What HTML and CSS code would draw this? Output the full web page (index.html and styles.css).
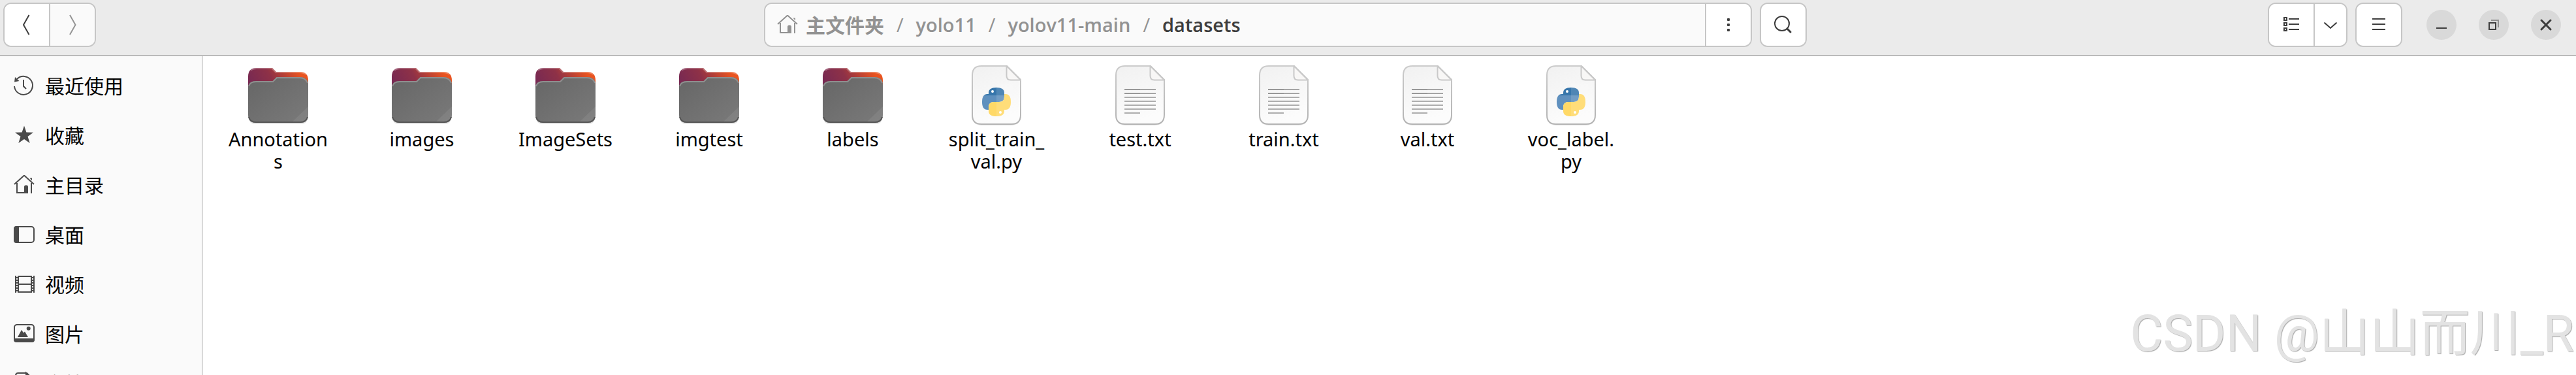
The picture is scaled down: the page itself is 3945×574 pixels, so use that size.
FILE: index.html
```html
<!DOCTYPE html>
<html lang="zh-CN">
<head>
<meta charset="UTF-8">
<meta name="viewport" content="width=device-width, initial-scale=1.0">
<title>datasets</title>
<link rel="stylesheet" href="styles.css">
</head>
<body>

<!-- SHARED ICONS -->
<svg class="defs" width="0" height="0" aria-hidden="true">
    <defs>
        <linearGradient id="folder-back" x1="0" y1="0.6" x2="1" y2="0.4">
            <stop offset="0" stop-color="#772953"/>
            <stop offset="0.4" stop-color="#8e3147"/>
            <stop offset="0.9" stop-color="#e95420"/>
        </linearGradient>
        <linearGradient id="folder-front" x1="0" y1="0" x2="1" y2="1">
            <stop offset="0" stop-color="#666"/>
            <stop offset="1" stop-color="#7a7a7a"/>
        </linearGradient>
        <linearGradient id="paper" x1="0" y1="0" x2="0.3" y2="1">
            <stop offset="0" stop-color="#f1f1f1"/>
            <stop offset="1" stop-color="#fcfcfc"/>
        </linearGradient>
        <linearGradient id="paper-edge" x1="0" y1="0" x2="0" y2="1">
            <stop offset="0" stop-color="#cbcbcb"/>
            <stop offset="1" stop-color="#b3b3b3"/>
        </linearGradient>
        <linearGradient id="snake-blue" gradientUnits="userSpaceOnUse" x1="0" y1="36" x2="0" y2="60">
            <stop offset="0.5" stop-color="#3776ab"/>
            <stop offset="0.5" stop-color="#5f90be"/>
        </linearGradient>
    </defs>
    <symbol id="home" viewBox="0 0 32 32">
        <path d="M1 14 16 0.500 31 14M5 12V27H20M27 12V28" fill="none" stroke="currentColor" stroke-width="2"/>
        <path d="M16 28V18Q16 15.500 18.500 15.500H19.500Q22 15.500 22 18V28ZM24.500 4.500H28V8.500Z" fill="currentColor" stroke="none"/>
    </symbol>
    <symbol id="folder" viewBox="0 0 96 96">
        <path d="M3 80V82Q3 92 14 92H82Q93 92 93 82V80Z" fill="#e4e4e4"/>
        <path d="M2 40V19Q2 6 15 6H39L45 12H81Q94 12 94 25V40Z" fill="url(#folder-back)"/>
        <path d="M6 10Q9 7 15 7H38.500L44.500 13H81Q87 13 90.500 16" fill="none" stroke="#fff" stroke-opacity="0.25" stroke-width="2"/>
        <path d="M2 36Q2 26 14 26H39.500L45.500 20H81Q94 20 94 32V78Q94 90 82 90H14Q2 90 2 78Z" fill="url(#folder-front)"/>
        <path d="M3 34Q5 27 14 27H40L46 21H81Q90 21 93 29" fill="none" stroke="#8f8f8f" stroke-width="2"/>
        <path d="M69 89 94 65V78Q94 89 82 89Z" fill="#fff" fill-opacity="0.07"/>
        <path d="M3 81Q5 89 14 89H82Q91 89 93 81" fill="none" stroke="#565656" stroke-width="2"/>
    </symbol>
    <symbol id="sheet" viewBox="0 0 96 96">
        <path d="M12 82Q12 94 26 94H70Q84 94 84 82" fill="#e6e6e6"/>
        <path d="M25 3H64L85 24V78Q85 92 71 92H25Q11 92 11 78V17Q11 3 25 3Z" fill="url(#paper)" stroke="url(#paper-edge)" stroke-width="2"/>
        <path d="M63.500 3V18Q63.500 24.500 70 24.500H85Z" fill="#f8f7f6" stroke="#c9c9c9" stroke-width="2" stroke-linejoin="round"/>
    </symbol>
    <symbol id="python" viewBox="0 0 96 96">
        <use href="#sheet"/>
        <path d="M36 46V44Q36 36 48 36T60 44V50Q60 58 52 58H44Q36 58 36 66V70H34Q26 70 26 58T34 46Z" fill="url(#snake-blue)"/>
        <path d="M60 70V72Q60 80 48 80T36 72V66Q36 58 44 58H52Q60 58 60 50V46H62Q70 46 70 58T62 70Z" fill="#ffd967"/>
        <circle cx="42" cy="42" r="2" fill="#fff"/>
        <circle cx="54" cy="74" r="2" fill="#fff"/>
        <path d="M48 30H74V84H48Z" fill="#fff" fill-opacity="0.12"/>
    </symbol>
    <symbol id="text" viewBox="0 0 96 96">
        <use href="#sheet"/>
        <path d="M24 39H48M24 45H48" stroke="#989898" stroke-width="2"/>
        <path d="M48 39H72M48 45H72" stroke="#a5a5a5" stroke-width="2"/>
        <path d="M24 51H72M24 57H72M24 63H72M24 69H72M24 75H48" stroke="#adadad" stroke-width="2"/>
    </symbol>
</svg>

<!-- HEADER BAR -->
<header class="header-bar">
    <div class="header-start">
        <div class="button-group">
            <button class="tool-button" type="button" aria-label="后退">
                <svg class="icon" viewBox="0 0 32 32"><path d="M19.500 1 11 16 19.500 31"/></svg>
            </button>
            <button class="tool-button" type="button" aria-label="前进" disabled>
                <svg class="icon" viewBox="0 0 32 32"><path d="M12 1 20.500 16 12 31"/></svg>
            </button>
        </div>
    </div>

    <div class="header-center">
        <div class="button-group path-bar">
            <nav class="breadcrumb">
                <a class="crumb crumb-home" href="#"><svg class="icon-home"><use href="#home"/></svg>主文件夹</a>
                <span class="slash">/</span>
                <a class="crumb" href="#">yolo11</a>
                <span class="slash">/</span>
                <a class="crumb" href="#">yolov11-main</a>
                <span class="slash">/</span>
                <a class="crumb current" href="#">datasets</a>
            </nav>
            <button class="tool-button" type="button" aria-label="更多">
                <svg class="icon solid" viewBox="0 0 32 32"><rect x="14" y="6" width="4" height="4" rx="1"/><rect x="14" y="14" width="4" height="4" rx="1"/><rect x="14" y="22" width="4" height="4" rx="1"/></svg>
            </button>
        </div>
        <div class="button-group">
            <button class="tool-button" type="button" aria-label="搜索">
                <svg class="icon" viewBox="0 0 32 32"><circle cx="14" cy="14" r="11"/><path d="M22 22 27 27" stroke-width="3" stroke-linecap="round"/></svg>
            </button>
        </div>
    </div>

    <div class="header-end">
        <div class="button-group">
            <button class="tool-button" type="button" aria-label="列表视图">
                <svg class="icon" viewBox="0 0 32 32"><path d="M5 5H9V9H5ZM5 13H9V17H5ZM5 21H9V25H5ZM12 7H28M12 15H28M12 23H28"/></svg>
            </button>
            <button class="tool-button narrow" type="button" aria-label="视图选项">
                <svg class="icon" viewBox="0 0 32 32"><path d="M6.500 12.500 16 21 25.500 12.500"/></svg>
            </button>
        </div>
        <div class="button-group">
            <button class="tool-button" type="button" aria-label="菜单">
                <svg class="icon" viewBox="0 0 32 32"><path d="M6 7H26M6 15H26M6 23H26"/></svg>
            </button>
        </div>
        <div class="window-controls">
            <button class="window-button" type="button" aria-label="最小化">
                <svg class="icon" viewBox="0 0 32 32"><path d="M8 21H24"/></svg>
            </button>
            <button class="window-button" type="button" aria-label="还原">
                <svg class="icon" viewBox="0 0 32 32"><path d="M9 13H19V23H9Z"/><path d="M12 9H23V20" stroke="#909090"/></svg>
            </button>
            <button class="window-button" type="button" aria-label="关闭">
                <svg class="icon" viewBox="0 0 32 32"><path d="M9 9 23 23M23 9 9 23" stroke-width="3" stroke-linecap="round"/></svg>
            </button>
        </div>
    </div>
</header>

<div class="content">
    <!-- SIDEBAR -->
    <nav class="sidebar">
        <a class="place" href="#">
            <svg class="icon" viewBox="0 0 32 32"><path d="M1 16A14 14 0 1 0 5 5M15 6V16L19 20"/><path d="M2 2 1 9.500 8.500 8Z" fill="currentColor" stroke="none"/></svg>
            最近使用
        </a>
        <a class="place" href="#">
            <svg class="icon solid" viewBox="0 0 32 32"><path d="M16 0.500 19.400 10.600 30 10.700 21.500 17 24.700 27 16 21 7.300 27 10.500 17 2 10.700 12.600 10.600Z"/></svg>
            收藏
        </a>
        <a class="place" href="#">
            <svg class="icon"><use href="#home"/></svg>
            主目录
        </a>
        <a class="place" href="#">
            <svg class="icon" viewBox="0 0 32 32"><rect x="1" y="3" width="30" height="24" rx="4"/><path d="M8 2V28H4Q0 28 0 24V6Q0 2 4 2Z" fill="currentColor" stroke="none"/></svg>
            桌面
        </a>
        <a class="place" href="#">
            <svg class="icon" viewBox="0 0 32 32"><path d="M3 2V28M31 2V28M7 2V28M27 2V28M6 3H28M6 15H28M6 27H28"/><path d="M5 4V28M29 4V28" stroke-dasharray="2 2"/></svg>
            视频
        </a>
        <a class="place" href="#">
            <svg class="icon" viewBox="0 0 32 32"><rect x="1" y="1" width="30" height="26" rx="4"/><path d="M0 22H32V24Q32 28 28 28H4Q0 28 0 24ZM6 20 12 9 15 13.500 17 11.500 22 20Z" fill="currentColor" stroke="none"/><circle cx="22.700" cy="6.700" r="3" fill="currentColor" stroke="none"/></svg>
            图片
        </a>
        <a class="place" href="#">
            <svg class="icon" viewBox="0 0 32 32"><path d="M7 -1H20L28 7V27Q28 30 25 30H7Q3 30 3 27V3Q3 -1 7 -1Z"/><path d="M19 -1V8H28Z" fill="currentColor"/></svg>
            文档
        </a>
    </nav>

    <!-- FILES -->
    <main class="files">
        <a class="file" href="#"><svg class="file-icon"><use href="#folder"/></svg><span>Annotation<wbr>s</span></a>
        <a class="file" href="#"><svg class="file-icon"><use href="#folder"/></svg><span>images</span></a>
        <a class="file" href="#"><svg class="file-icon"><use href="#folder"/></svg><span>ImageSets</span></a>
        <a class="file" href="#"><svg class="file-icon"><use href="#folder"/></svg><span>imgtest</span></a>
        <a class="file" href="#"><svg class="file-icon"><use href="#folder"/></svg><span>labels</span></a>
        <a class="file" href="#"><svg class="file-icon"><use href="#python"/></svg><span>split_train_<wbr>val.py</span></a>
        <a class="file" href="#"><svg class="file-icon"><use href="#text"/></svg><span>test.txt</span></a>
        <a class="file" href="#"><svg class="file-icon"><use href="#text"/></svg><span>train.txt</span></a>
        <a class="file" href="#"><svg class="file-icon"><use href="#text"/></svg><span>val.txt</span></a>
        <a class="file" href="#"><svg class="file-icon"><use href="#python"/></svg><span>voc_label.<wbr>py</span></a>
    </main>
</div>

<div class="watermark">CSDN @山山而川_R</div>

</body>
</html>
```
FILE: styles.css
```css
* {
    box-sizing: border-box;
}

body {
    margin: 0;
    height: 100vh;
    display: flex;
    flex-direction: column;
    position: relative;
    overflow: hidden;
    background: #fff;
    color: #000;
    font-family: "Open Sans", "Noto Sans CJK SC", sans-serif;
    font-size: 29px;
}

a {
    color: inherit;
    text-decoration: none;
}

button {
    margin: 0;
    padding: 0;
    border: none;
    color: inherit;
}

.defs {
    position: absolute;
}

.icon {
    display: block;
    flex: none;
    width: 32px;
    height: 32px;
    overflow: visible;
    fill: none;
    stroke: currentColor;
    stroke-width: 2px;
}

.icon.solid {
    fill: currentColor;
    stroke: none;
}

/* HEADER BAR */
.header-bar {
    display: grid;
    grid-template-columns: 1fr 1.371fr 1fr;
    flex: none;
    padding: 4px 13px 12px 5px;
    background: #ebebeb;
    border-bottom: 2px solid #bababa;
    color: #3d3d3d;
}

.header-start,
.header-center,
.header-end {
    display: flex;
    align-items: center;
    gap: 12px;
}

.header-end {
    justify-content: flex-end;
}

.button-group {
    display: flex;
    height: 68px;
    border: 2px solid #c6c6c6;
    border-radius: 12px;
    background: #fff;
    overflow: hidden;
}

.tool-button {
    display: flex;
    align-items: center;
    justify-content: center;
    width: 68px;
    background: #fff;
}

.tool-button.narrow {
    width: 48px;
}

.tool-button:disabled {
    background: #fafafa;
    color: #959595;
}

.button-group > * + * {
    box-sizing: content-box;
    border-left: 2px solid #c6c6c6;
}

.path-bar {
    flex: 1;
}

.breadcrumb {
    display: flex;
    flex: 1;
    align-items: center;
    gap: 19px;
    padding-left: 18px;
    padding-bottom: 2px;
    background: #fafafa;
    color: #929292;
    white-space: nowrap;
}

.crumb {
    font-weight: 600;
}

.crumb-home {
    display: flex;
    align-items: center;
    gap: 12px;
    font-family: "Noto Sans CJK SC", sans-serif;
    font-size: 30px;
    font-weight: 700;
}

.icon-home {
    width: 32px;
    height: 32px;
    margin-top: 4px;
    overflow: visible;
}

.crumb.current {
    color: #3d3d3d;
}

.window-controls {
    display: flex;
    gap: 34px;
    margin: 0 10px 0 25px;
}

.window-button {
    display: flex;
    align-items: center;
    justify-content: center;
    width: 46px;
    height: 46px;
    border-radius: 50%;
    background: #d9d9d9;
}

.content {
    display: flex;
    flex: 1;
    min-height: 0;
}

/* SIDEBAR */
.sidebar {
    flex: none;
    width: 311px;
    padding-top: 6px;
    background: #fafafa;
    border-right: 2px solid #d9d9d9;
    overflow: hidden;
}

.place {
    display: flex;
    align-items: center;
    gap: 16px;
    height: 76px;
    padding-left: 21px;
    font-family: "Noto Sans CJK SC", sans-serif;
    font-size: 30px;
}

.place .icon {
    margin-top: 4px;
    color: #4a4a4a;
}

/* FILES */
.files {
    display: flex;
    flex: 1;
    flex-wrap: wrap;
    align-content: flex-start;
    padding: 12px 5px;
    font-family: "Noto Sans", sans-serif;
}

.file {
    display: flex;
    flex-direction: column;
    align-items: center;
    gap: 2px;
    width: 220px;
    padding: 0 30px;
    line-height: 34px;
    text-align: center;
}

.file-icon {
    width: 96px;
    height: 96px;
}

/* WATERMARK */
.watermark {
    position: absolute;
    right: 3px;
    bottom: 18px;
    color: #e3e3e3;
    font-family: Roboto, "Noto Sans CJK SC", sans-serif;
    font-size: 77px;
    line-height: 90px;
    text-shadow: 1px 1px 1px #aaa;
    white-space: nowrap;
}
```
